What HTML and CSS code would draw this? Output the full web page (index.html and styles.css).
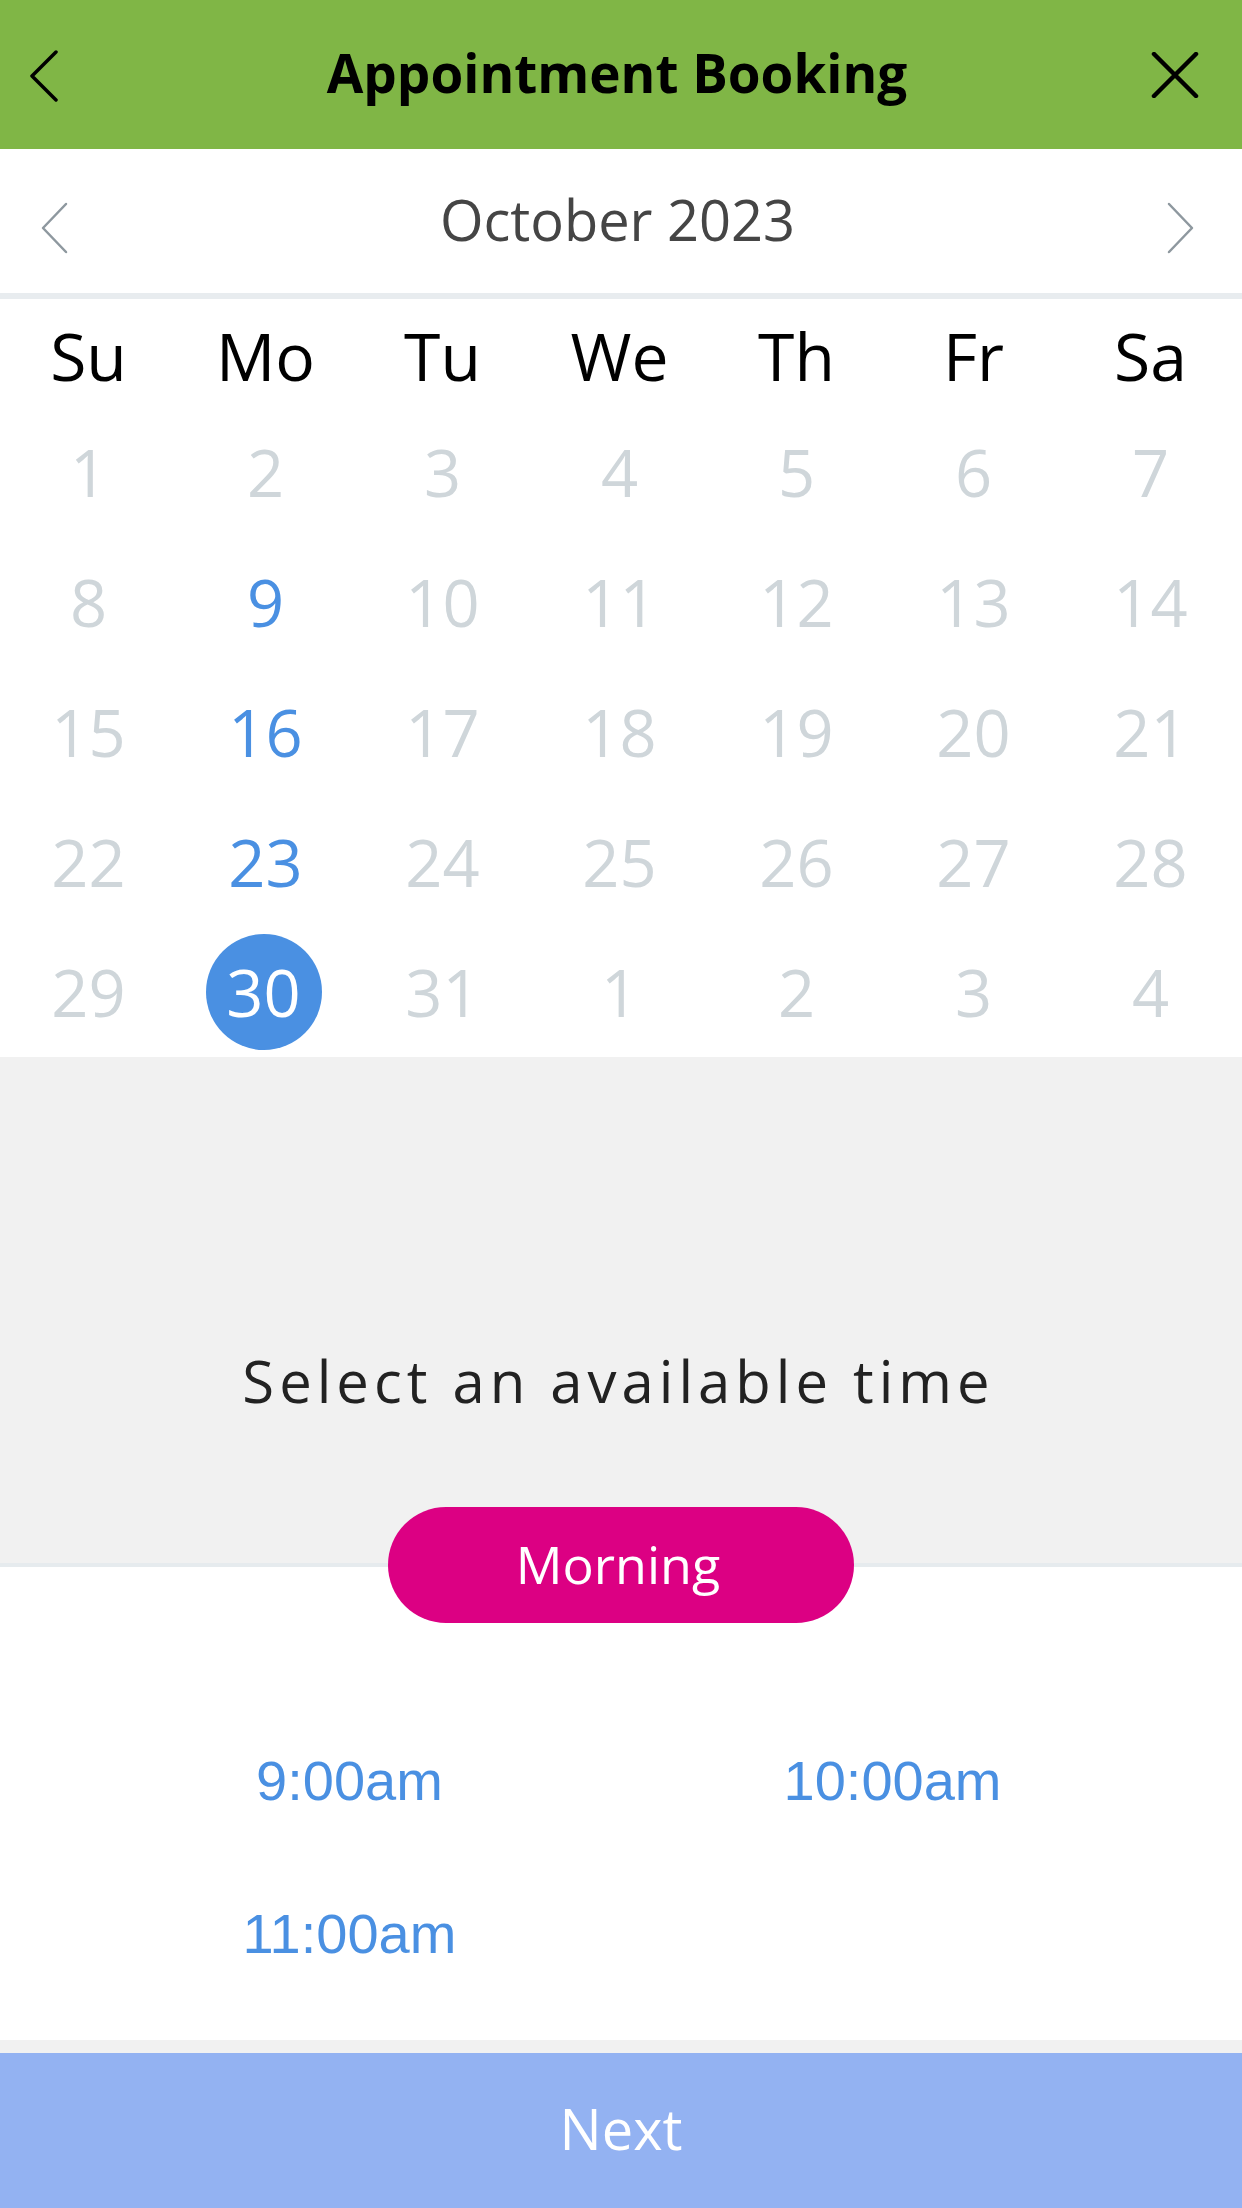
FILE: index.html
```html
<!DOCTYPE html>
<html>
<head>
<meta charset="utf-8">
<link rel="stylesheet" href="styles.css">
</head>
<body>
<div class="app">
  <header class="topbar">
    <div class="topbar-left">
      <svg class="icon-back" width="30" height="52" viewBox="0 0 30 52"><path d="M26 2 L2 26 L26 50" fill="none" stroke="#000" stroke-width="3.5" stroke-linecap="round" stroke-linejoin="round"/></svg>
    </div>
    <h1 class="title">Appointment Booking</h1>
    <div class="topbar-right">
      <svg class="icon-close" width="48" height="46" viewBox="0 0 48 46"><path d="M3 2 L45 44 M45 2 L3 44" fill="none" stroke="#000" stroke-width="4.5" stroke-linecap="round"/></svg>
    </div>
  </header>

  <section class="monthbar">
    <svg class="month-nav" width="30" height="52" viewBox="0 0 30 52"><path d="M26 2 L3 26 L26 50" fill="none" stroke="#8e989f" stroke-width="2.5" stroke-linecap="round" stroke-linejoin="round"/></svg>
    <div class="month">October 2023</div>
    <svg class="month-nav" width="30" height="52" viewBox="0 0 30 52"><path d="M4 2 L27 26 L4 50" fill="none" stroke="#8e989f" stroke-width="2.5" stroke-linecap="round" stroke-linejoin="round"/></svg>
  </section>

  <section class="calendar">
    <div class="weekdays">
      <div>Su</div><div>Mo</div><div>Tu</div><div>We</div><div>Th</div><div>Fr</div><div>Sa</div>
    </div>
    <div class="days">
      <div class="day">1</div><div class="day">2</div><div class="day">3</div><div class="day">4</div><div class="day">5</div><div class="day">6</div><div class="day">7</div>
      <div class="day">8</div><div class="day avail">9</div><div class="day">10</div><div class="day">11</div><div class="day">12</div><div class="day">13</div><div class="day">14</div>
      <div class="day">15</div><div class="day avail">16</div><div class="day">17</div><div class="day">18</div><div class="day">19</div><div class="day">20</div><div class="day">21</div>
      <div class="day">22</div><div class="day avail">23</div><div class="day">24</div><div class="day">25</div><div class="day">26</div><div class="day">27</div><div class="day">28</div>
      <div class="day">29</div><div class="day"><span class="selected">30</span></div><div class="day">31</div><div class="day">1</div><div class="day">2</div><div class="day">3</div><div class="day">4</div>
    </div>
  </section>

  <section class="select-panel">
    <div class="select-text">Select an available time</div>
  </section>

  <div class="period-wrap">
    <div class="period">Morning</div>
  </div>

  <section class="times">
    <div class="time">9:00am</div>
    <div class="time">10:00am</div>
    <div class="time">11:00am</div>
  </section>

  <div class="strip"></div>
  <button class="next">Next</button>
</div>
</body>
</html>
```

FILE: styles.css
```css
* { box-sizing: border-box; }
html, body { margin: 0; padding: 0; }
body {
  width: 1242px;
  height: 2208px;
  background: #ffffff;
  font-family: "Open Sans", "Noto Sans", sans-serif;
  overflow: hidden;
}
.app {
  display: flex;
  flex-direction: column;
  height: 2208px;
}
.topbar {
  height: 149px;
  background: #80b646;
  display: grid;
  grid-template-columns: 1fr auto 1fr;
  align-items: center;
  flex-shrink: 0;
}
.topbar-left { padding-left: 30px; display: flex; align-items: center; padding-top: 2px; }
.topbar-right { display: flex; justify-content: flex-end; padding-right: 43px; padding-top: 0; }
.title {
  margin: 0;
  font-family: "Open Sans", "Noto Sans", sans-serif;
  font-weight: 700;
  font-size: 53px;
  color: #000;
  padding-right: 8px;
  padding-bottom: 4px;
}
.monthbar {
  height: 150px;
  border-bottom: 6px solid #e8ecef;
  display: flex;
  align-items: center;
  justify-content: space-between;
  padding: 0 47px 4px 40px;
  flex-shrink: 0;
}
.month-nav { margin-top: 18px; }
.month {
  font-size: 56px;
  color: #454545;
}
.calendar { flex-shrink: 0; padding-right: 3px; }
.weekdays {
  display: grid;
  grid-template-columns: repeat(7, 1fr);
  height: 108px;
  line-height: 112px;
  font-size: 66px;
  color: #000;
  text-align: center;
}
.days {
  display: grid;
  grid-template-columns: repeat(7, 1fr);
  grid-auto-rows: 130px;
  font-size: 65px;
  color: #cfd6da;
}
.day {
  display: flex;
  align-items: center;
  justify-content: center;
}
.day.avail { color: #4a90e2; }
.selected {
  width: 116px;
  height: 116px;
  border-radius: 50%;
  background: #4a90e2;
  color: #fff;
  display: flex;
  align-items: center;
  justify-content: center;
  margin-right: 4px;
}
.select-panel {
  height: 510px;
  background: #f1f1f1;
  border-bottom: 4px solid #e6ebee;
  display: flex;
  justify-content: center;
  padding-top: 284px;
  padding-right: 5px;
  flex-shrink: 0;
}
.select-text {
  font-size: 58px;
  line-height: 80px;
  color: #222;
  letter-spacing: 5px;
}
.period-wrap {
  display: flex;
  justify-content: center;
  margin-top: -60px;
  flex-shrink: 0;
}
.period {
  width: 466px;
  height: 116px;
  border-radius: 58px;
  background: #dc0083;
  color: #fff;
  font-size: 52px;
  display: flex;
  align-items: center;
  justify-content: center;
  padding-bottom: 4px;
  padding-right: 6px;
}
.times {
  flex: 1;
  display: grid;
  grid-template-columns: 1fr 1fr;
  grid-auto-rows: 80px;
  row-gap: 73px;
  padding: 118px 78px 0;
  align-content: start;
}
.time {
  font-family: "Liberation Sans", Arial, sans-serif;
  font-size: 56px;
  line-height: 80px;
  color: #4a90e2;
  text-align: center;
}
.strip {
  height: 13px;
  background: #f1f1f1;
  flex-shrink: 0;
}
.next {
  height: 155px;
  width: 100%;
  border: 0;
  background: #93b2f2;
  color: #fff;
  font-family: "Open Sans", "Noto Sans", sans-serif;
  font-size: 56px;
  flex-shrink: 0;
  padding: 0 0 6px;
}
```
